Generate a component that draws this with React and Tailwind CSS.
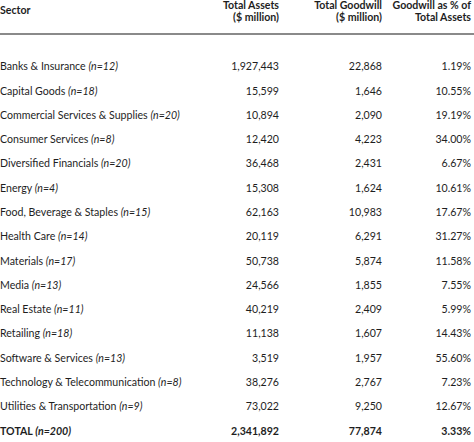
const rows = [
  ['Banks & Insurance', 'n=12', '1,927,443', '22,868', '1.19%'],
  ['Capital Goods', 'n=18', '15,599', '1,646', '10.55%'],
  ['Commercial Services & Supplies', 'n=20', '10,894', '2,090', '19.19%'],
  ['Consumer Services', 'n=8', '12,420', '4,223', '34.00%'],
  ['Diversified Financials', 'n=20', '36,468', '2,431', '6.67%'],
  ['Energy', 'n=4', '15,308', '1,624', '10.61%'],
  ['Food, Beverage & Staples', 'n=15', '62,163', '10,983', '17.67%'],
  ['Health Care', 'n=14', '20,119', '6,291', '31.27%'],
  ['Materials', 'n=17', '50,738', '5,874', '11.58%'],
  ['Media', 'n=13', '24,566', '1,855', '7.55%'],
  ['Real Estate', 'n=11', '40,219', '2,409', '5.99%'],
  ['Retailing', 'n=18', '11,138', '1,607', '14.43%'],
  ['Software & Services', 'n=13', '3,519', '1,957', '55.60%'],
  ['Technology & Telecommunication', 'n=8', '38,276', '2,767', '7.23%'],
  ['Utilities & Transportation', 'n=9', '73,022', '9,250', '12.67%'],
];

const grid = 'grid grid-cols-[190px_89px_103px_89px]';

export default function App() {
  return (
    <div className="w-[474px] h-[442px] bg-white text-[#1e1e1e] text-[10.6px] overflow-hidden" style={{ fontFamily: 'Lato, "Liberation Sans", sans-serif' }}>
      <div className={`${grid} items-start h-[35px] font-bold leading-[11.8px] border-b-2 border-[#8a8a8a]`}>
        <div className="mt-[5px]">Sector</div>
        <div className="text-right">Total Assets<br />($ million)</div>
        <div className="text-right">Total Goodwill<br />($ million)</div>
        <div className="text-right">Goodwill as % of<br />Total Assets</div>
      </div>
      <div className="pt-[20px]">
        {rows.map(r => (
          <div key={r[0]} className={`${grid} items-center h-[24.3px]`}>
            <div className="whitespace-nowrap">{r[0]} <i>({r[1]})</i></div>
            <div className="text-right">{r[2]}</div>
            <div className="text-right">{r[3]}</div>
            <div className="text-right">{r[4]}</div>
          </div>
        ))}
        <div className={`${grid} items-center h-[24.3px] font-bold`}>
          <div>TOTAL <i>(n=200)</i></div>
          <div className="text-right">2,341,892</div>
          <div className="text-right">77,874</div>
          <div className="text-right">3.33%</div>
        </div>
      </div>
    </div>
  );
}
